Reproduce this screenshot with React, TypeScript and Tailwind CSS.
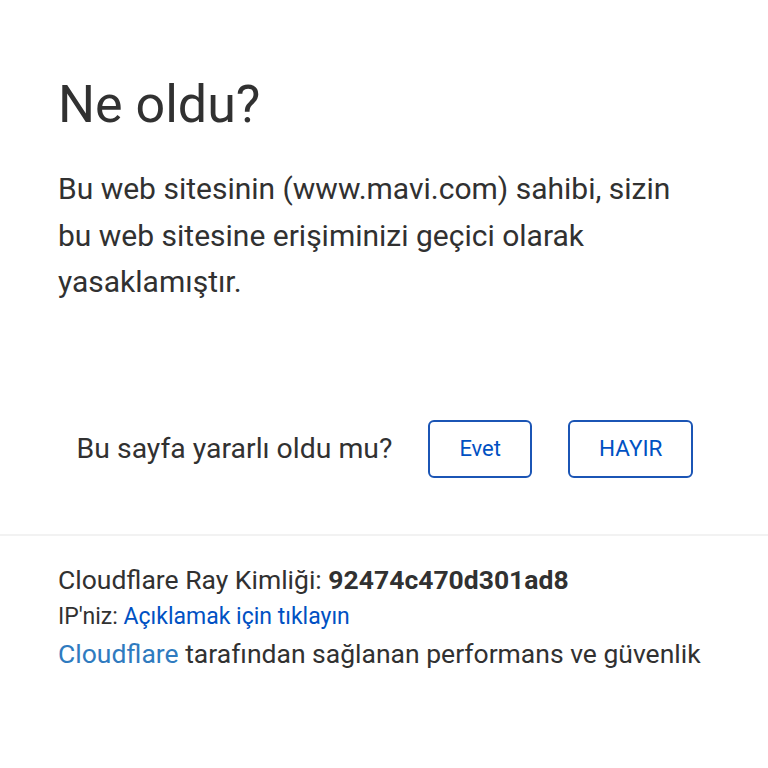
import React from "react";

export default function App() {
  return (
    <div className="min-h-[768px] w-full bg-white font-['Roboto',sans-serif] text-[#313131]">
      <div className="px-[58px] pt-[74px]">
        <h1 className="text-[52px] leading-[62px] font-normal">Ne oldu?</h1>
        <p className="mt-[30px] text-[30px] leading-[46.5px]">
          Bu web sitesinin (www.mavi.com) sahibi, sizin bu web sitesine erişiminizi geçici olarak yasaklamıştır.
        </p>
      </div>
      <div className="mt-[114px] flex items-center justify-center gap-[36px] pl-[2px]">
        <span className="text-[28.4px] leading-[34px]">Bu sayfa yararlı oldu mu?</span>
        <button className="h-[58px] px-[29px] rounded-[6px] border-[2px] border-[#1b55b5] text-[22px] text-[#0051c3]">
          Evet
        </button>
        <button className="h-[58px] px-[29px] rounded-[6px] border-[2px] border-[#1b55b5] text-[22.5px] text-[#0051c3]">
          HAYIR
        </button>
      </div>
      <div className="mt-[56px] h-[2px] w-full bg-[#f2f2f2]" />
      <div className="px-[58px] pt-[25px] text-[26.5px] leading-[37px]">
        <div>
          Cloudflare Ray Kimliği: <span className="font-bold">92474c470d301ad8</span>
        </div>
        <div className="text-[23px]">
          IP'niz: <span className="text-[#0051c3]">Açıklamak için tıklayın</span>
        </div>
        <div>
          <span className="text-[#2f7bbf]">Cloudflare</span> tarafından sağlanan performans ve güvenlik
        </div>
      </div>
    </div>
  );
}
